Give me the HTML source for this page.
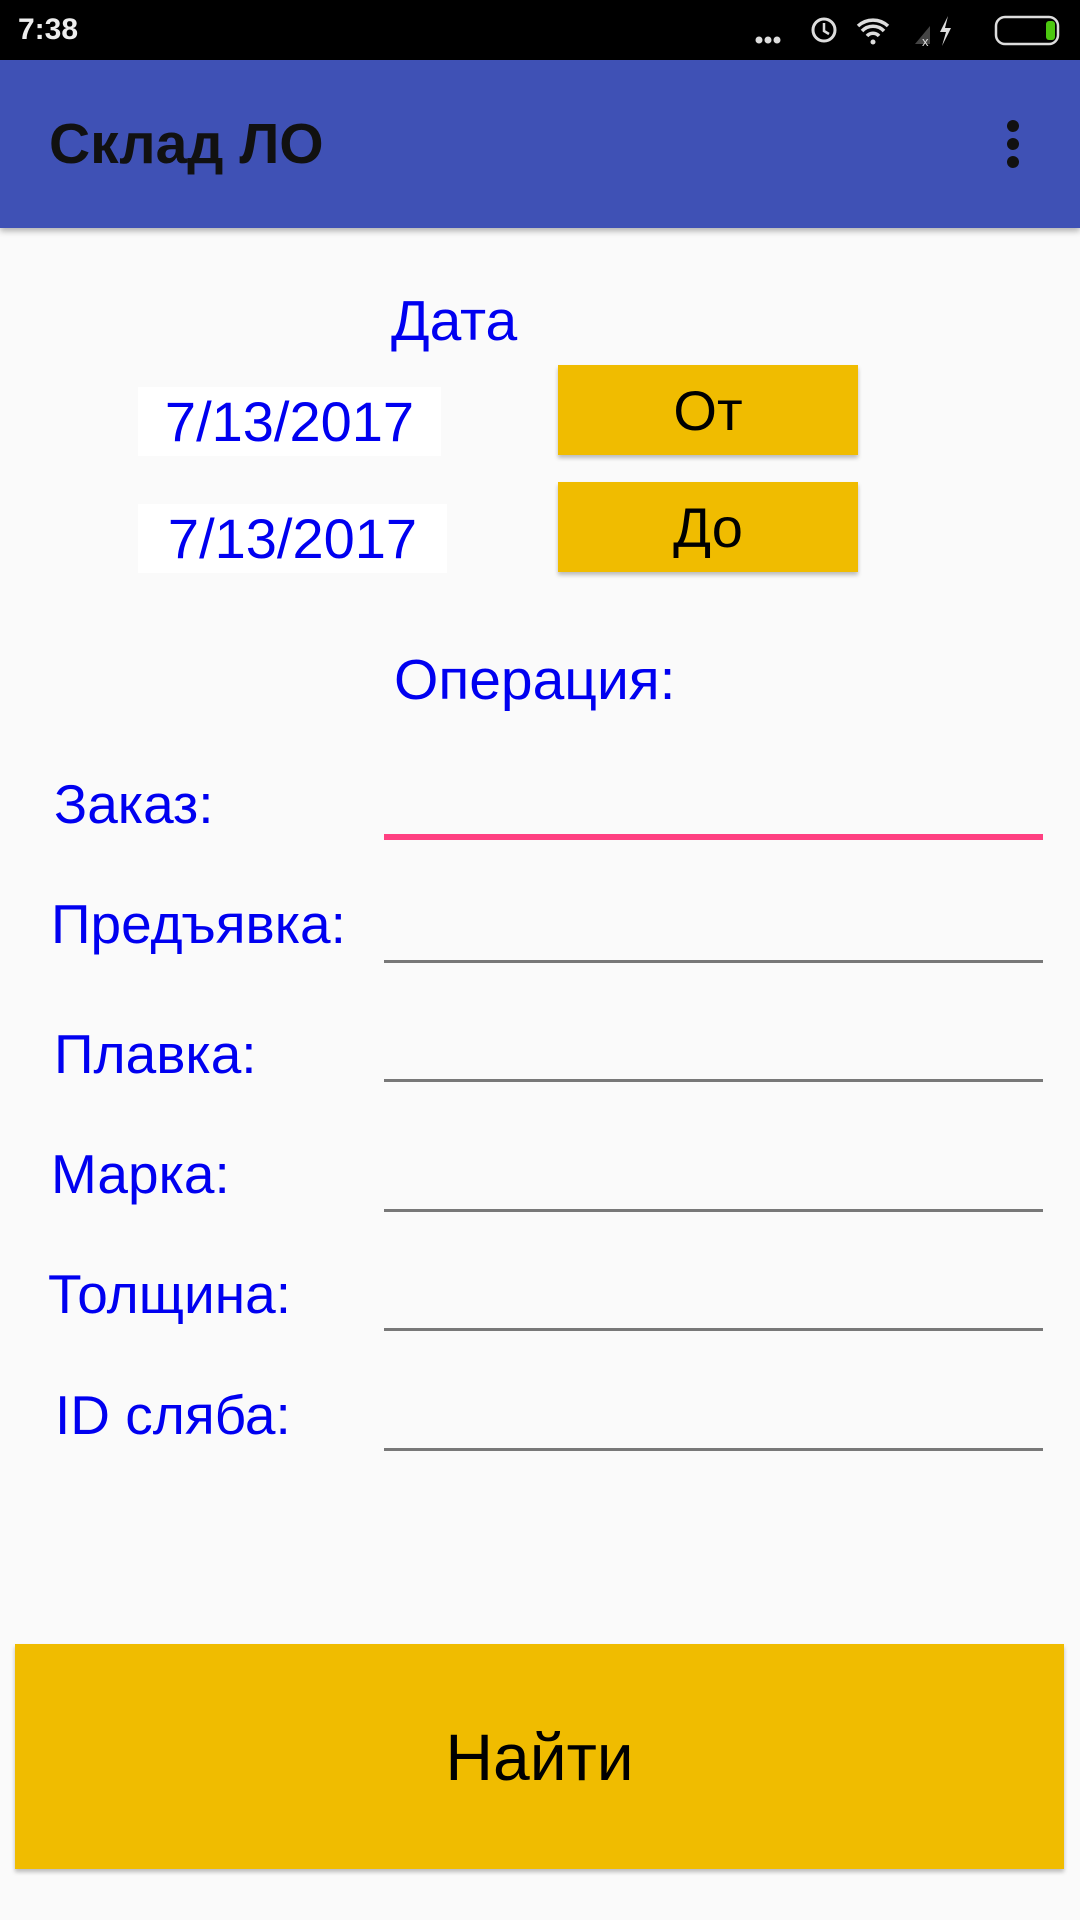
<!DOCTYPE html>
<html><head><meta charset="utf-8"><style>
*{margin:0;padding:0;box-sizing:border-box}
body{width:1080px;height:1920px;background:#FAFAFA;position:relative;overflow:hidden;font-family:"Liberation Sans",sans-serif}
.a{position:absolute;white-space:nowrap;line-height:1}
.blue{color:#0000F0}
.line{position:absolute;left:384px;width:659px;height:3px;background:#787878}
.btn{position:absolute;background:#F0BC00;box-shadow:0 3px 4px rgba(0,0,0,.25);color:#000;display:flex;align-items:center;justify-content:center}
.box{position:absolute;background:#fff;display:flex;align-items:center;justify-content:center;color:#0000F0;font-size:56px}
</style></head><body>
<div style="position:absolute;left:0;top:0;width:1080px;height:60px;background:#000"></div>
<div class="a" style="left:18px;top:15px;color:#eee;font-size:30px;font-weight:bold">7:38</div>
<svg style="position:absolute;left:750px;top:10px" width="320" height="40" viewBox="0 0 320 40">
<g fill="#ddd"><circle cx="9" cy="30" r="3.5"/><circle cx="18" cy="30" r="3.5"/><circle cx="27" cy="30" r="3.5"/></g>
<circle cx="74" cy="20" r="11" fill="none" stroke="#ddd" stroke-width="3"/><path d="M74 13v8l5 3" stroke="#ddd" stroke-width="2.5" fill="none"/>
<path d="M108 16a22 22 0 0 1 30 0M112 21a15 15 0 0 1 22 0M117 26a8 8 0 0 1 12 0" stroke="#ddd" stroke-width="3.5" fill="none"/><circle cx="123" cy="32" r="2.5" fill="#ddd"/>
<path d="M165 34l15-18v18z" fill="#444"/><text x="172" y="36" font-size="13" fill="#ddd" font-family="Liberation Sans">x</text>
<path d="M198 6l-8 16h6l-4 14 9-18h-6z" fill="#ddd"/>
<rect x="246" y="7" width="62" height="27" rx="9" fill="none" stroke="#ddd" stroke-width="2.5"/><rect x="296" y="11" width="9" height="19" rx="3" fill="#4cc810"/>
</svg>
<div style="position:absolute;left:0;top:60px;width:1080px;height:168px;background:#3F51B5;box-shadow:0 3px 6px rgba(0,0,0,.3)"></div>
<div class="a" style="left:49px;top:116px;font-size:57px;color:#111;font-weight:bold">Склад ЛО</div>
<svg style="position:absolute;left:1004px;top:118px" width="20" height="52"><g fill="#111"><circle cx="9" cy="8" r="6"/><circle cx="9" cy="26" r="6"/><circle cx="9" cy="44" r="6"/></g></svg>

<div class="a blue" style="left:391px;top:293px;font-size:57px">Дата</div>
<div class="box" style="left:138px;top:387px;width:303px;height:69px">7/13/2017</div>
<div class="box" style="left:138px;top:504px;width:309px;height:69px">7/13/2017</div>
<div class="btn" style="left:558px;top:365px;width:300px;height:90px;font-size:56px">От</div>
<div class="btn" style="left:558px;top:482px;width:300px;height:90px;font-size:56px">До</div>

<div class="a blue" style="left:394px;top:652px;font-size:57px">Операция:</div>
<div class="a blue" style="left:54px;top:777px;font-size:55px">Заказ:</div>
<div class="a blue" style="left:51px;top:897px;font-size:55px">Предъявка:</div>
<div class="a blue" style="left:54px;top:1027px;font-size:55px">Плавка:</div>
<div class="a blue" style="left:51px;top:1147px;font-size:55px">Марка:</div>
<div class="a blue" style="left:48px;top:1267px;font-size:55px">Толщина:</div>
<div class="a blue" style="left:55px;top:1388px;font-size:55px">ID сляба:</div>

<div class="line" style="top:834px;height:6px;background:#FF4081"></div>
<div class="line" style="top:960px"></div>
<div class="line" style="top:1079px"></div>
<div class="line" style="top:1209px"></div>
<div class="line" style="top:1328px"></div>
<div class="line" style="top:1448px"></div>

<div class="btn" style="left:15px;top:1644px;width:1049px;height:225px;font-size:66px">Найти</div>
</body></html>
